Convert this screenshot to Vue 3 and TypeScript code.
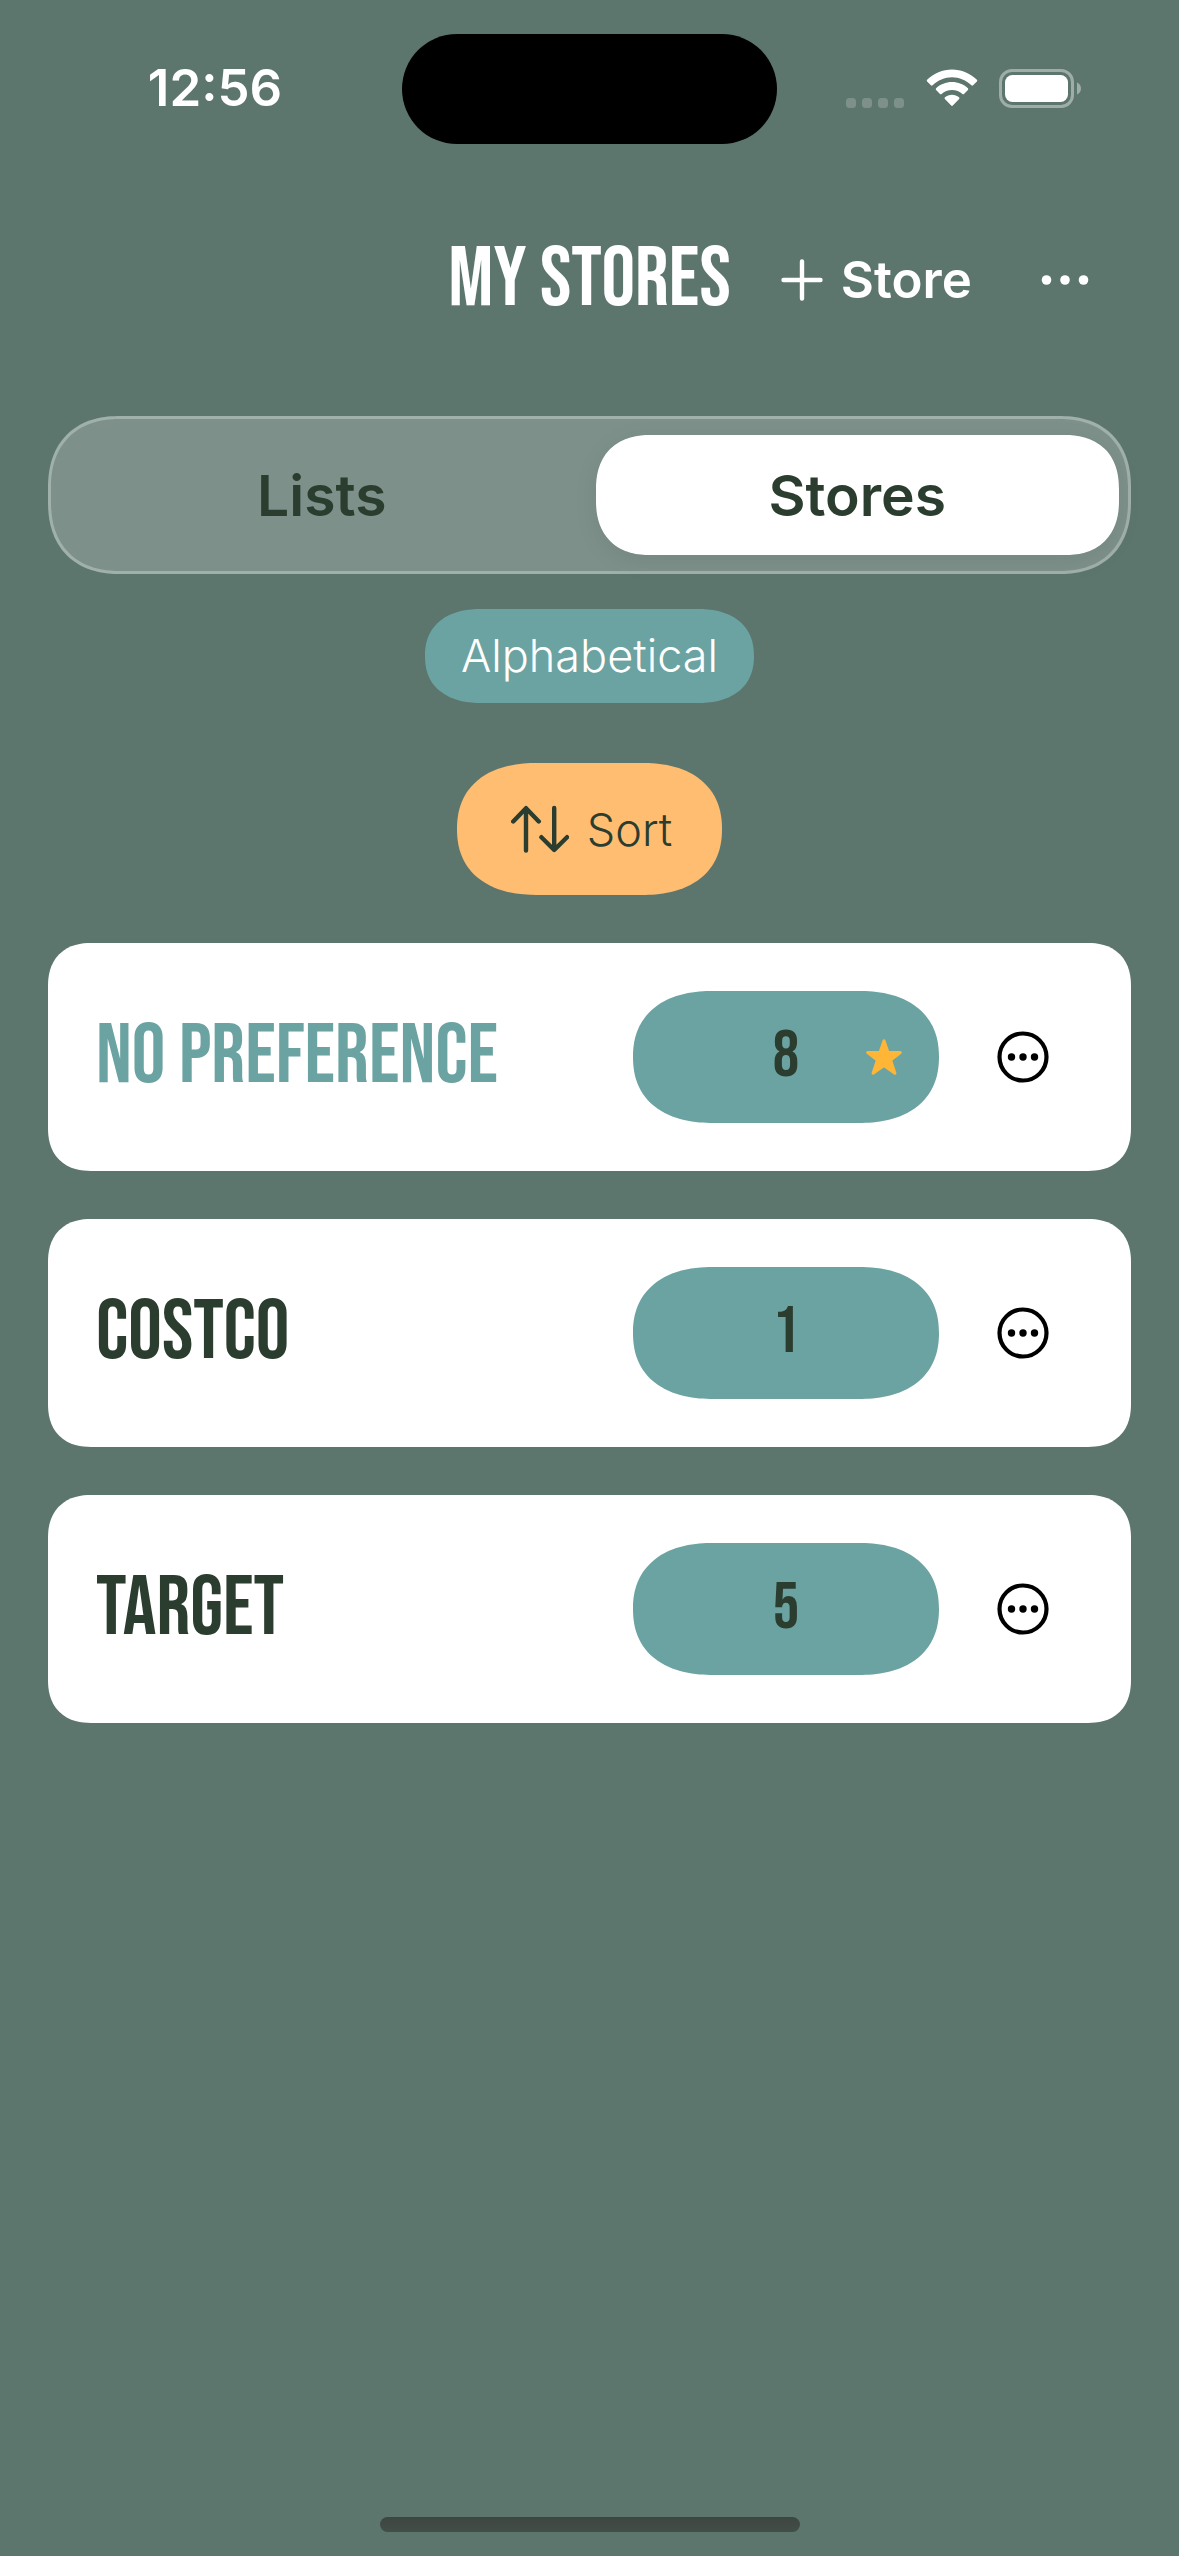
<script setup lang="ts">
import { ref } from 'vue'

interface Store {
  name: string
  count: number
  muted?: boolean
  favorite?: boolean
}

type Tab = 'Lists' | 'Stores'

const tabs: Tab[] = ['Lists', 'Stores']
const activeTab = ref<Tab>('Stores')

const stores: Store[] = [
  { name: 'NO PREFERENCE', count: 8, muted: true, favorite: true },
  { name: 'COSTCO', count: 1 },
  { name: 'TARGET', count: 5 },
]
</script>

<template>
  <div class="screen">
    <div class="status-bar">
      <div class="status-side">
        <time class="clock">12:56</time>
      </div>
      <div class="island"></div>
      <div class="status-side">
        <div class="indicators">
          <svg class="signal" width="58" height="10" viewBox="0 0 58 10" aria-hidden="true">
            <rect v-for="i in 4" :key="i" :x="(i - 1) * 16" width="10" height="10" rx="3.5" fill="#7d918a" />
          </svg>
          <svg class="wifi" width="52" height="38" viewBox="0 0 52 38" aria-hidden="true">
            <g fill="#fff">
              <path d="M26 .5c9.400 0 18.200 3.800 24.900 10.200.5.5.5 1.200 0 1.700l-3.800 3.900c-.5.5-1.200.5-1.700 0C40.200 11.300 33.400 8.300 26 8.300S11.800 11.300 6.600 16.300c-.5.500-1.200.500-1.700 0l-3.800-3.900c-.5-.5-.5-1.200 0-1.700C7.800 4.300 16.600.5 26 .5z" />
              <path d="M26 13.100c6.100 0 11.700 2.300 15.900 6.200.5.5.5 1.200 0 1.700l-3.900 3.900c-.5.5-1.100.5-1.600 0-2.800-2.500-6.400-3.900-10.400-3.900s-7.600 1.400-10.400 3.900c-.5.5-1.100.5-1.600 0L10.100 21c-.5-.5-.5-1.200 0-1.700 4.200-3.900 9.800-6.200 15.900-6.200z" />
              <path d="M26 25.700c2.700 0 5.100.9 7 2.600.6.500.6 1.200.1 1.700l-6.300 6.500c-.5.500-1.100.500-1.600 0L18.900 30c-.5-.5-.5-1.200.1-1.700 1.900-1.700 4.300-2.600 7-2.600z" />
            </g>
          </svg>
          <svg class="battery" width="82" height="39" viewBox="0 0 82 39" aria-hidden="true">
            <rect x="1.500" y="1.500" width="72" height="36" rx="11.500" fill="none" stroke="#9fada8" stroke-width="3" />
            <rect x="6" y="6" width="63" height="27" rx="7.500" fill="#fff" />
            <path d="M78 13.500c2.400 1 4 3.300 4 6s-1.600 5-4 6z" fill="#9fada8" />
          </svg>
        </div>
      </div>
    </div>

    <header class="nav-bar">
      <h1 class="title">MY STORES</h1>
      <div class="nav-actions">
        <button type="button" class="add-store">
          <svg width="42" height="42" viewBox="0 0 42 42" aria-hidden="true">
            <path d="M21 2.500v37M2.500 21h37" stroke="#fff" stroke-width="4.400" stroke-linecap="round" />
          </svg>
          Store
        </button>
        <button type="button" class="more" aria-label="More options">
          <svg width="48" height="10" viewBox="0 0 48 10" fill="#fff" aria-hidden="true">
            <circle cx="5.500" cy="5" r="4.800" />
            <circle cx="24" cy="5" r="4.800" />
            <circle cx="42.500" cy="5" r="4.800" />
          </svg>
        </button>
      </div>
    </header>

    <main class="content">
      <div class="segmented" role="tablist">
        <button
          v-for="tab in tabs"
          :key="tab"
          type="button"
          role="tab"
          class="segment"
          :class="{ active: tab === activeTab }"
          :aria-selected="tab === activeTab"
          @click="activeTab = tab"
        >
          {{ tab }}
        </button>
      </div>

      <div class="sort-mode">Alphabetical</div>

      <button type="button" class="sort">
        <svg width="58" height="48" viewBox="0 0 58 48" fill="none" stroke="#2b3d2f" stroke-width="4.400" stroke-linecap="round" stroke-linejoin="round" aria-hidden="true">
          <path d="M15 45.500V4M2.200 16.500 15 3.200l12.800 13.300" />
          <path d="M43.200 3v41.500M30.400 32.200l12.800 12.800L56 32.200" />
        </svg>
        Sort
      </button>

      <ul class="stores">
        <li v-for="store in stores" :key="store.name" class="card">
          <h2 class="name" :class="{ muted: store.muted }">{{ store.name }}</h2>
          <div class="count">
            {{ store.count }}
            <svg v-if="store.favorite" class="star" width="36" height="36" viewBox="0 0 36 36" aria-label="Favorite">
              <path d="M18 1.800l4 11.700 12.300.1-9.700 7.500 4.300 13.100L18 26.600 7.100 34.200l4.300-13.100L1.700 13.600l12.300-.1z" fill="#ffb637" stroke="#ffb637" stroke-width="3" stroke-linejoin="round" />
            </svg>
          </div>
          <button type="button" class="card-menu" :aria-label="`Options for ${store.name}`">
            <svg width="52" height="52" viewBox="0 0 52 52" aria-hidden="true">
              <circle cx="26" cy="26" r="23.500" fill="none" stroke="#000" stroke-width="4.200" />
              <circle cx="14.500" cy="26" r="3.700" />
              <circle cx="26" cy="26" r="3.700" />
              <circle cx="37.500" cy="26" r="3.700" />
            </svg>
          </button>
        </li>
      </ul>
    </main>

    <div class="home-indicator"></div>
  </div>
</template>

<style>
body {
  margin: 0;
  background: #5c766d;
}
</style>

<style scoped>
.screen {
  display: flex;
  flex-direction: column;
  box-sizing: border-box;
  min-height: 100vh;
  padding-bottom: 24px;
  background: #5c766d;
  color: #2b3d2f;
  font-family: Inter, 'Liberation Sans', sans-serif;
}

button {
  margin: 0;
  padding: 0;
  border: 0;
  background: none;
  color: inherit;
  font: inherit;
  cursor: pointer;
}

svg {
  display: block;
  flex: none;
}

/* Continuous-curvature corners, falling back to plain rounded ones */
.segmented,
.segment,
.sort-mode,
.sort,
.card,
.count {
  corner-shape: superellipse(1.2);
}

.status-bar {
  display: flex;
  padding-top: 34px;
}

.status-side {
  display: flex;
  flex: 1;
  align-items: center;
  justify-content: center;
  height: 110px;
  padding-bottom: 2px;
  box-sizing: border-box;
}

.clock {
  margin-left: 28px;
  color: #fff;
  font-size: 51px;
  font-weight: 600;
  line-height: 60px;
}

.island {
  width: 375px;
  height: 110px;
  border-radius: 55px;
  background: #000;
}

.indicators {
  display: flex;
  align-items: center;
  margin-right: 30px;
}

.signal {
  align-self: flex-end;
}

.wifi {
  margin-left: 22px;
}

.battery {
  margin-left: 21px;
}

.nav-bar {
  display: grid;
  grid-template-columns: 1fr auto 1fr;
  align-items: center;
  height: 134px;
  margin-top: 69px;
  padding: 0 48px;
  color: #fff;
}

.title {
  grid-column: 2;
  margin: 0;
  font-family: 'Bebas Neue', Oswald, sans-serif;
  font-size: 84px;
  font-weight: 400;
  line-height: 100px;
}

.nav-actions {
  display: flex;
  align-items: center;
  justify-content: space-between;
  padding: 0 42px 0 50px;
}

.add-store {
  display: flex;
  align-items: center;
  gap: 18px;
  font-size: 51px;
  font-weight: 600;
  line-height: 60px;
}

.content {
  display: flex;
  flex: 1;
  flex-direction: column;
  align-items: center;
  padding: 69px 48px 0;
}

.segmented {
  display: flex;
  gap: 12px;
  box-sizing: border-box;
  width: 100%;
  padding: 16px 9px;
  border: 3px solid #a0b0aa;
  border-radius: 72px;
  background: #7d918a;
}

.segment {
  flex: 1;
  height: 120px;
  border-radius: 54px;
  font-size: 57px;
  font-weight: 600;
}

.segment.active {
  background: #fff;
  box-shadow: 0 6px 24px rgba(0, 0, 0, 0.08);
}

.sort-mode {
  margin-top: 35px;
  padding: 0 36px;
  border-radius: 56px / 47px;
  background: #6ba3a2;
  color: #fff;
  font-size: 45px;
  font-weight: 300;
  line-height: 94px;
}

.sort {
  display: flex;
  align-items: center;
  gap: 18px;
  height: 132px;
  margin-top: 60px;
  padding: 0 50px 0 54px;
  border-radius: 80px / 66px;
  background: #ffbd72;
  font-size: 45px;
  font-weight: 300;
}

.stores {
  display: flex;
  flex-direction: column;
  gap: 48px;
  width: 100%;
  margin: 48px 0 0;
  padding: 0;
  list-style: none;
}

.card {
  display: flex;
  align-items: center;
  padding: 48px;
  border-radius: 43px;
  background: #fff;
}

.name {
  flex: 1;
  margin: 0;
  font-family: 'Bebas Neue', Oswald, sans-serif;
  font-size: 84px;
  font-weight: 400;
  line-height: 100px;
}

.name.muted {
  color: #6ba3a2;
}

.count {
  position: relative;
  width: 306px;
  border-radius: 80px / 66px;
  background: #6ba3a2;
  font-family: 'Bebas Neue', Oswald, sans-serif;
  font-size: 66px;
  line-height: 132px;
  text-align: center;
}

.star {
  position: absolute;
  top: 48px;
  right: 37px;
}

.card-menu {
  padding: 30px 34px 30px 58px;
}

.home-indicator {
  align-self: center;
  width: 420px;
  height: 15px;
  border-radius: 8px;
  background: linear-gradient(#3d4641, #434e49);
}
</style>
